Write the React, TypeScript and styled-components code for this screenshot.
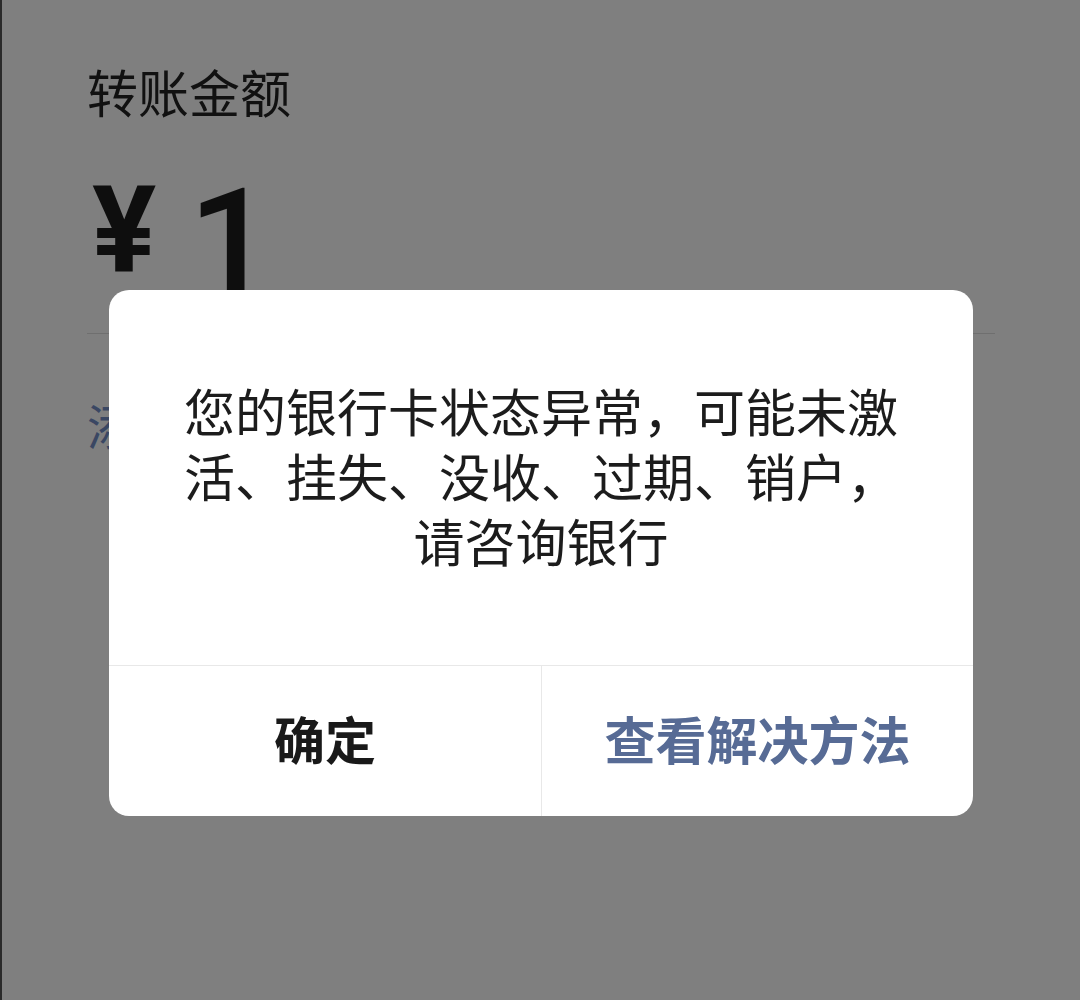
import React from "react";
import styled, { createGlobalStyle } from "styled-components";

const GlobalStyle = createGlobalStyle`
  html, body {
    margin: 0;
    padding: 0;
    background: #7f7f7f;
  }
  * { box-sizing: border-box; }
`;

const Page = styled.div`
  position: relative;
  width: 1080px;
  height: 1000px;
  overflow: hidden;
  background: #7f7f7f;
  border-left: 2px solid #2a2a2a;
  padding: 59px 85px 0 85px;
  font-family: "Noto Sans CJK SC", "Noto Sans", sans-serif;
`;

const Title = styled.div`
  font-size: 51px;
  line-height: 64px;
  color: #111;
  font-weight: 400;
`;

const AmountRow = styled.div`
  display: flex;
  align-items: flex-start;
  margin-top: 48px;
  height: 162px;
  font-family: Roboto, "Liberation Sans", sans-serif;
  color: #0e0e0e;
`;

const Currency = styled.span`
  font-size: 120px;
  font-weight: 700;
  line-height: 1;
  margin-left: 5px;
  margin-top: 0px;
`;

const Digit = styled.span`
  font-size: 150px;
  font-weight: 500;
  line-height: 1;
  margin-left: 32px;
  margin-top: -2px;
`;

const Divider = styled.div`
  height: 1px;
  background: #6f6f6f;
`;

const Remark = styled.div`
  margin-top: 58px;
  font-size: 48px;
  line-height: 64px;
  color: #3a4763;
`;

const Overlay = styled.div`
  position: absolute;
  inset: 0;
  display: flex;
  justify-content: center;
  align-items: flex-start;
  padding-top: 290px;
`;

const Dialog = styled.div`
  width: 864px;
  background: #ffffff;
  border-radius: 20px;
  overflow: hidden;
  font-family: "Noto Sans CJK SC", "Noto Sans", sans-serif;
`;

const Message = styled.div`
  padding: 88px 30px 92px;
  font-size: 51px;
  line-height: 65px;
  text-align: center;
  color: #1c1c1c;
`;

const Footer = styled.div`
  display: grid;
  grid-template-columns: 1fr 1fr;
  border-top: 1px solid #e8e8e8;
  height: 151px;
`;

const Action = styled.button<{ $primary?: boolean }>`
  all: unset;
  display: flex;
  align-items: center;
  justify-content: center;
  padding-bottom: 6px;
  font-family: "Noto Sans CJK SC", "Noto Sans", sans-serif;
  font-size: 51px;
  font-weight: 700;
  color: ${(p) => (p.$primary ? "#576b95" : "#191919")};
  border-left: ${(p) => (p.$primary ? "1px solid #e8e8e8" : "none")};
`;

export default function App() {
  return (
    <>
      <GlobalStyle />
      <Page>
        <Title>转账金额</Title>
        <AmountRow>
          <Currency>¥</Currency>
          <Digit>1</Digit>
        </AmountRow>
        <Divider />
        <Remark>添加转账说明</Remark>
        <Overlay>
          <Dialog>
            <Message>
              您的银行卡状态异常，可能未激
              <br />
              活、挂失、没收、过期、销户，
              <br />
              请咨询银行
            </Message>
            <Footer>
              <Action>确定</Action>
              <Action $primary>查看解决方法</Action>
            </Footer>
          </Dialog>
        </Overlay>
      </Page>
    </>
  );
}
